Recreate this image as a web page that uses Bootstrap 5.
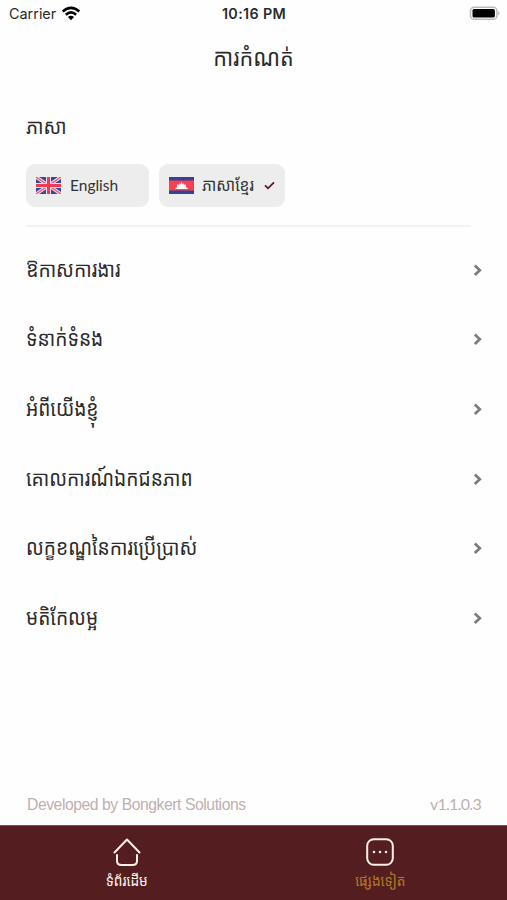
<!DOCTYPE html>
<html lang="km">
<head>
<meta charset="utf-8">
<meta name="viewport" content="width=device-width, initial-scale=1">
<title>ការកំណត់</title>
<link href="https://cdn.jsdelivr.net/npm/bootstrap@5.3.0/dist/css/bootstrap.min.css" rel="stylesheet">
<style>
body{font-family:"Noto Sans Khmer","Khmer OS","Inter",sans-serif;color:#2b2b2b;background:#fefefe;line-height:1.2}
.status-bar{height:28px;font:14.4px/28px Inter,sans-serif;padding:0 7px 0 9px;display:grid;grid-template-columns:1fr auto 1fr}
.clock{font-weight:600;font-size:14.3px;letter-spacing:.35px;margin-left:-1px}
.page-title{height:60px;font-size:21.6px;line-height:60px;transform:translateY(-1px) scaleY(1.12)}
.section-label{font-size:19px;height:32px;line-height:32px;margin-top:22px;transform:scaleY(1.1)}
.content{padding:0 25px 0 26px}
.langs{gap:10px;margin-top:21.5px}
.lang-btn{height:43px;border:0;border-radius:9px;background:#ededed;color:#333;padding:0 10px 0;font-size:15.5px}
.lang-en{width:123px;font-family:Lato,sans-serif}
.lang-en span{margin-left:9px}
.lang-km{width:126px}
.lang-km span{transform:translateY(-1px) scaleY(1.12)}
.rule{width:445px;height:2px;background:#f3f3f3;margin:18.500px 0 8.500px}
.menu-item{height:69.6px;font-size:19.2px;color:#2b2b2b;text-decoration:none;white-space:nowrap}
.menu-item span{transform:translateY(-2px) scaleY(1.1)}
.credit{color:#bfb0b0;padding:0 25px 8px 27px;font:15.7px/24px "Liberation Sans",sans-serif;letter-spacing:-.43px}
.version{font-family:Lato,sans-serif;font-size:16px;letter-spacing:-.7px;transform:translate(-1px,-1px)}
.tab-bar{height:75px;background:#541d20;border-top:1px solid #7a4d50}
.tab-item{color:#fff0ea;text-decoration:none;font-size:13.7px;padding-top:12px;white-space:nowrap}
.tab-item span{margin-top:6px;transform:scaleY(1.1)}
.tab-item.current{color:#b27a22}
</style>
<script src="https://cdn.jsdelivr.net/npm/bootstrap@5.3.0/dist/js/bootstrap.bundle.min.js"></script>
</head>
<body>
<svg class="d-none"><symbol id="chevron" viewBox="0 0 9 13"><path d="M1.800 1.500L6.800 6.200L1.800 10.900" fill="none" stroke="#7c7c7c" stroke-width="2.700"/></symbol></svg>
<div class="d-flex flex-column vh-100 overflow-hidden">
<header>
<div class="status-bar">
<div class="d-flex align-items-center"><span>Carrier</span>
<svg style="margin-left:5px" width="20" height="16" viewBox="0 0 20 16"><g fill="none" stroke="#000" stroke-width="2.500"><path d="M1.700 5.500Q10-1.800 18.300 5.500"/><path d="M4.800 8.700Q10 4 15.200 8.700"/></g><path d="M6.900 11Q10 8.400 13.100 11L10 14.200Z"/></svg></div>
<div class="clock">10:16 PM</div>
<div class="d-flex align-items-center justify-content-end"><svg width="31" height="16" viewBox="0 0 31 16"><rect x="1.500" y="1.300" width="26.400" height="12" rx="3.600" fill="#fff" stroke="#bbb" stroke-width="1.500"/><rect x="3.500" y="3" width="22.400" height="8.600" rx="1.500"/><path d="M29.300 5Q31.500 7.200 29.300 9.400Z" fill="#aaa"/></svg></div>
</div>
<h1 class="page-title text-center fw-normal m-0">ការកំណត់</h1>
</header>
<main class="content flex-grow-1">
<div class="section-label">ភាសា</div>
<div class="langs d-flex">
<button class="lang-btn lang-en d-flex align-items-center"><svg width="25" height="17" viewBox="0 0 50 34"><path fill="#354a9b" d="M0 0h50v34H0z"/><path d="M0 0l50 34M50 0L0 34" stroke="#f5dce8" stroke-width="7"/><path d="M0 0l50 34M50 0L0 34" stroke="#f0506a" stroke-width="2.500"/><path d="M25 0v34M0 17h50" stroke="#f5dce8" stroke-width="10"/><path d="M25 0v34M0 17h50" stroke="#ed3b55" stroke-width="6"/></svg><span>English</span></button>
<button class="lang-btn lang-km d-flex align-items-center"><svg width="25" height="17" viewBox="0 0 50 34"><path fill="#354099" d="M0 0h50v34H0z"/><path fill="#f8404f" d="M0 7h50v20H0z"/><path fill="#fff" d="M13 24v-3h3v-5l2-2 2 3 1-5 2 2 2-5 2 5 2-2 1 5 2-3 2 2v5h3v3z"/></svg><span class="ms-2">ភាសាខ្មែរ</span><svg class="ms-auto" width="11" height="9" viewBox="0 0 11 9"><path d="M1 4.300L4 7.300L10 1.300" fill="none" stroke="#541d20" stroke-width="1.800"/></svg></button>
</div>
<div class="rule"></div>
<nav>
<a href="#" class="menu-item d-flex align-items-center justify-content-between"><span>ឱកាសការងារ</span><svg width="9" height="13"><use href="#chevron"/></svg></a>
<a href="#" class="menu-item d-flex align-items-center justify-content-between"><span>ទំនាក់ទំនង</span><svg width="9" height="13"><use href="#chevron"/></svg></a>
<a href="#" class="menu-item d-flex align-items-center justify-content-between"><span>អំពីយើងខ្ញុំ</span><svg width="9" height="13"><use href="#chevron"/></svg></a>
<a href="#" class="menu-item d-flex align-items-center justify-content-between"><span>គោលការណ៍ឯកជនភាព</span><svg width="9" height="13"><use href="#chevron"/></svg></a>
<a href="#" class="menu-item d-flex align-items-center justify-content-between"><span>លក្ខខណ្ឌនៃការប្រើប្រាស់</span><svg width="9" height="13"><use href="#chevron"/></svg></a>
<a href="#" class="menu-item d-flex align-items-center justify-content-between"><span>មតិកែលម្អ</span><svg width="9" height="13"><use href="#chevron"/></svg></a>
</nav>
</main>
<div class="credit d-flex justify-content-between"><span>Developed by Bongkert Solutions</span><span class="version">v1.1.0.3</span></div>
<footer class="tab-bar row g-0 flex-shrink-0">
<a href="#" class="tab-item col-6 d-flex flex-column align-items-center"><svg width="28" height="29" viewBox="0 0 28 29" fill="none" stroke="#fff0ea" stroke-width="2" stroke-linecap="round" stroke-linejoin="round"><path d="M1.500 14.500L14 1.500L26.500 14.500M4 17v6q0 4 4.500 4h11q4.500 0 4.500-4v-6"/></svg><span>ទំព័រដើម</span></a>
<a href="#" class="tab-item current col-6 d-flex flex-column align-items-center"><svg width="28" height="29" viewBox="0 0 28 29"><rect x="1.200" y="1.200" width="25.600" height="25.600" rx="6.500" fill="none" stroke="#fff0ea" stroke-width="2"/><g fill="#fff0ea"><circle cx="8" cy="14" r="1.300"/><circle cx="14" cy="14" r="1.300"/><circle cx="20" cy="14" r="1.300"/></g></svg><span>ផ្សេងទៀត</span></a>
</footer>
</div>
</body>
</html>
